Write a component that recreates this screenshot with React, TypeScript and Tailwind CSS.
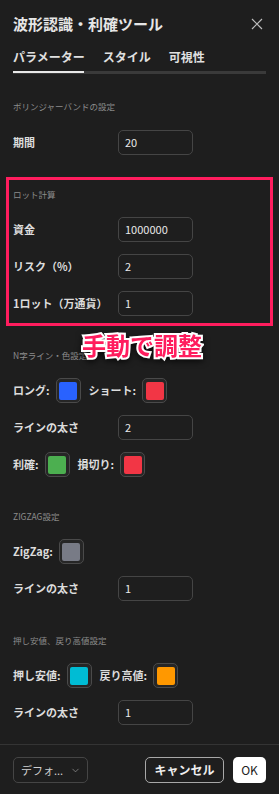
import { ChevronDown } from "lucide-react"

const font = { fontFamily: '"Noto Sans CJK JP", "Noto Sans", sans-serif' }

function SectionLabel({ children, first }: { children: string; first?: boolean }) {
    return (
        <div className={`h-4 flex items-center text-[8.5px] text-[#8c8c8c] ${first ? "" : "mt-[25px]"}`}>
            {children}
        </div>
    )
}

function InputRow({ label, value }: { label: string; value: string }) {
    return (
        <div className="h-[37px] flex items-center">
            <div className="w-[105px] text-[11px] font-semibold text-[#dcdcdc]">{label}</div>
            <div className="w-[75px] h-[25px] rounded-[5px] border border-[#454545] flex items-center px-[6px] text-[11px] text-[#e8e8e8]">
                {value}
            </div>
        </div>
    )
}

function Swatch({ color }: { color: string }) {
    return (
        <div className="w-[25px] h-[25px] rounded-[5px] border border-[#4a4a4a] bg-[#262626] flex items-center justify-center">
            <div className="w-[18px] h-[18px] rounded-[2px]" style={{ backgroundColor: color }} />
        </div>
    )
}

function ColorRow({ items }: { items: { label: string; color: string }[] }) {
    return (
        <div className="h-[37px] flex items-center gap-[8px]">
            {items.map((it) => (
                <div key={it.label} className="flex items-center gap-[6px]">
                    <span className="text-[11px] font-semibold text-[#dcdcdc]">{it.label}</span>
                    <Swatch color={it.color} />
                </div>
            ))}
        </div>
    )
}

export default function App() {
    return (
        <div className="relative w-[279px] h-[794px] bg-[#1e1e1e] text-white overflow-hidden flex flex-col" style={font}>
            {/* Header */}
            <div className="h-12 px-[13px] flex items-center justify-between">
                <h1 className="text-[15px] font-bold text-[#e6e6e6]">波形認識・利確ツール</h1>
                <svg width="12" height="12" viewBox="0 0 12 12" className="mr-[3px]">
                    <path d="M1 1L11 11M11 1L1 11" stroke="#bdbdbd" strokeWidth="1.2" />
                </svg>
            </div>

            {/* Tabs */}
            <div className="px-[13px]">
                <div className="h-[18px] flex items-center gap-[18px] text-[12px] font-bold text-[#e0e0e0]">
                    <span>パラメーター</span>
                    <span>スタイル</span>
                    <span>可視性</span>
                </div>
                <div className="mt-[5px] h-[3px] bg-[#3a3a3a] relative">
                    <div className="w-[71px] h-[2px] bg-[#e8e8e8]" />
                </div>
            </div>

            {/* Body */}
            <div className="px-[13px] mt-[24px] flex flex-col">
                <SectionLabel first>ボリンジャーバンドの設定</SectionLabel>
                <div className="mt-[10px]">
                    <InputRow label="期間" value="20" />
                </div>

                <div className="relative">
                    <SectionLabel>ロット計算</SectionLabel>
                    <div className="mt-[9px]">
                        <InputRow label="資金" value="1000000" />
                        <InputRow label="リスク（%）" value="2" />
                        <InputRow label="1ロット（万通貨）" value="1" />
                    </div>
                    <div className="absolute left-[-7px] right-[-7px] top-[16px] bottom-[-4px] border-[3px] border-[#ff1d5e]" />
                </div>

                <SectionLabel>N字ライン・色設定</SectionLabel>
                <div className="mt-[9px]">
                    <ColorRow
                        items={[
                            { label: "ロング:", color: "#2962ff" },
                            { label: "ショート:", color: "#f23645" },
                        ]}
                    />
                    <InputRow label="ラインの太さ" value="2" />
                    <ColorRow
                        items={[
                            { label: "利確:", color: "#4caf50" },
                            { label: "損切り:", color: "#f23645" },
                        ]}
                    />
                </div>

                <SectionLabel>ZIGZAG設定</SectionLabel>
                <div className="mt-[9px]">
                    <ColorRow items={[{ label: "ZigZag:", color: "#787b86" }]} />
                    <InputRow label="ラインの太さ" value="1" />
                </div>

                <SectionLabel>押し安値、戻り高値設定</SectionLabel>
                <div className="mt-[9px]">
                    <ColorRow
                        items={[
                            { label: "押し安値:", color: "#00bcd4" },
                            { label: "戻り高値:", color: "#ff9800" },
                        ]}
                    />
                    <InputRow label="ラインの太さ" value="1" />
                </div>
            </div>

            {/* Footer */}
            <div className="mt-[13px] border-t border-[#343434] px-[13px] pt-[12px] flex items-center">
                <div className="w-[75px] h-[26px] rounded-[5px] border border-[#454545] flex items-center justify-between pl-[7px] pr-[6px] text-[11px] text-[#d0d0d0]">
                    <span>デフォ...</span>
                    <ChevronDown size={11} strokeWidth={1.5} className="text-[#9a9a9a]" />
                </div>
                <div className="ml-auto w-[79px] h-[26px] rounded-[5px] border border-[#a8a8a8] flex items-center justify-center text-[12px] font-bold text-[#eeeeee]">
                    キャンセル
                </div>
                <div className="ml-[9px] w-[33px] h-[26px] rounded-[5px] bg-white flex items-center justify-center text-[12px] text-[#222]">
                    OK
                </div>
            </div>

            {/* Annotation */}
            <div className="absolute left-[82px] top-[333px] text-[24px] leading-none font-bold text-[#ff1d5e] [-webkit-text-stroke:4px_white] [paint-order:stroke_fill] drop-shadow-[0_2px_3px_rgba(0,0,0,0.7)]">
                手動で調整
            </div>
        </div>
    )
}
